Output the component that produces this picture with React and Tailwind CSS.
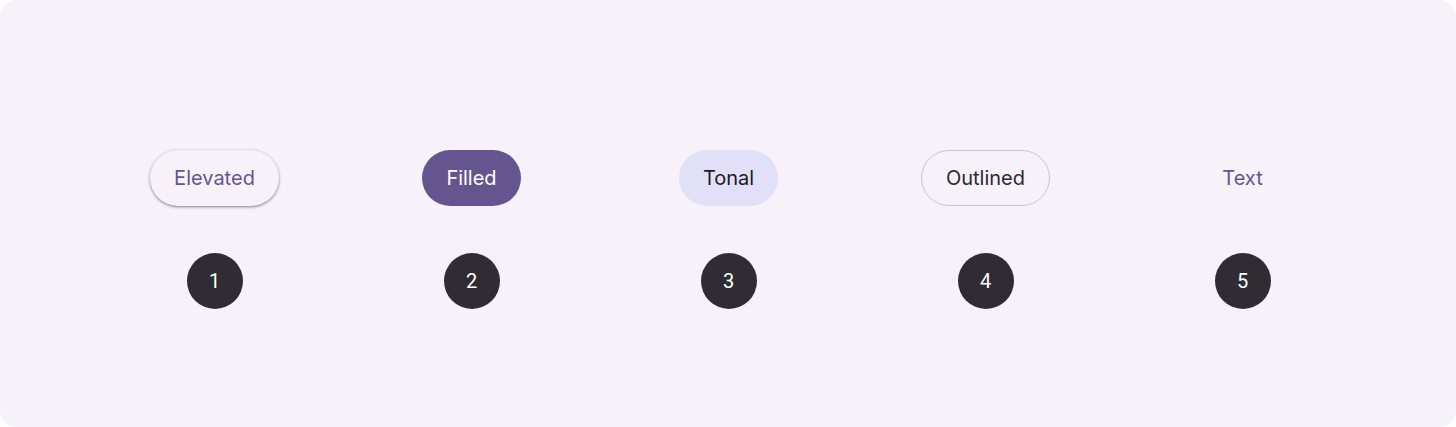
import React from 'react';

const buttons = [
  { label: 'Elevated', cls: 'bg-[#f7f2fa] text-[#65558f] shadow-[0_1px_3px_1px_rgba(0,0,0,0.15),0_1px_2px_rgba(0,0,0,0.3)] px-6' },
  { label: 'Filled', cls: 'bg-[#65558f] text-white px-6' },
  { label: 'Tonal', cls: 'bg-[#e2e0f9] text-[#1d1b20] px-6' },
  { label: 'Outlined', cls: 'border border-[#cac4d0] text-[#2b2930] px-6' },
  { label: 'Text', cls: 'text-[#65558f] px-3' },
];

const App = () => {
  return (
    <div className="w-[1456px] h-[427px] bg-white" style={{ fontFamily: 'Inter, Roboto, sans-serif' }}>
      <div className="h-full rounded-2xl bg-[#f7f2fa] pt-[150px] pl-[86px] pr-[85px]">
        <div className="grid grid-cols-5">
          {buttons.map((b) => (
            <div key={b.label} className="flex justify-center">
              <button className={`h-14 rounded-full text-[20px] leading-none ${b.cls}`}>
                {b.label}
              </button>
            </div>
          ))}
        </div>
        <div className="grid grid-cols-5 mt-[47px]">
          {buttons.map((b, i) => (
            <div key={b.label} className="flex justify-center">
              <div className="w-14 h-14 rounded-full bg-[#2f2d33] text-white text-[20px] flex items-center justify-center" style={{ fontFamily: 'Roboto, sans-serif' }}>
                {i + 1}
              </div>
            </div>
          ))}
        </div>
      </div>
    </div>
  );
};

export default App;
